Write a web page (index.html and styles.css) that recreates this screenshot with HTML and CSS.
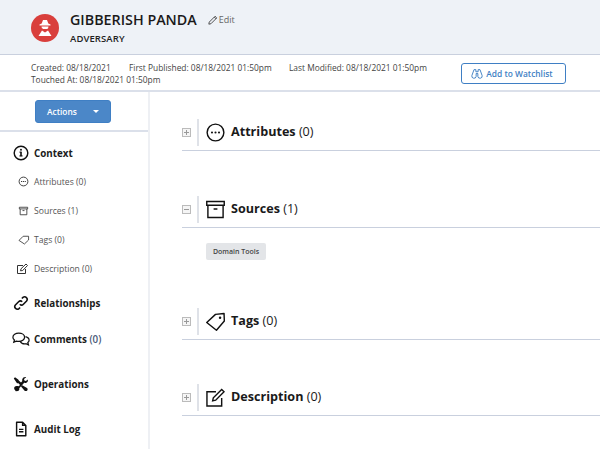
FILE: index.html
```html
<!DOCTYPE html>
<html lang="en">
<head>
<meta charset="utf-8">
<title>Gibberish Panda</title>
<link rel="stylesheet" href="styles.css">
</head>
<body>
<header class="hero">
  <div class="avatar">
    <svg viewBox="0 0 28 28" width="28" height="28"><path fill="#fff" d="M12 6h4l1.300 3.500 2.200 1v1h-11v-1l2.200-1zM10.500 12.500h7l-.4 1.800c-.6.9-1.700.7-3.100.7s-2.500.2-3.100-.7zM11 16.500l3 2 3-2 3.500 5.500h-13z"/></svg>
  </div>
  <div class="hero-text">
    <div class="title-row">
      <h1>GIBBERISH PANDA</h1>
      <span class="edit"><svg viewBox="0 0 12 12" width="10" height="10"><path fill="none" stroke="#333" stroke-width="1" d="M1.500 8.500 8.500 1.500l2 2-7 7-2.500.5zM7.500 2.500l2 2"/></svg>Edit</span>
    </div>
    <div class="subtitle">ADVERSARY</div>
  </div>
</header>
<div class="meta">
  <div class="dates">
    <div class="date-row"><span class="d1">Created: 08/18/2021</span><span class="d2">First Published: 08/18/2021 01:50pm</span><span>Last Modified: 08/18/2021 01:50pm</span></div>
    <div>Touched At: 08/18/2021 01:50pm</div>
  </div>
  <button class="watch"><svg viewBox="0 0 14 12" width="12" height="11"><path fill="none" stroke="#3f7fc4" stroke-width="1.100" d="M3.500 1.500h2.200v2.500h2.600V1.500h2.200l2.500 7a2 2 0 0 1-5 1V6H6v3.500a2.500 2.500 0 0 1-5-1z"/></svg>Add to Watchlist</button>
</div>
<div class="body">
  <aside class="side">
    <div class="act-wrap"><button class="actions"><span>Actions</span><i class="caret"></i></button></div>
    <nav class="nav">
      <div class="top t-context"><svg class="ni" viewBox="0 0 20 20"><circle cx="10" cy="10" r="8.500" fill="none" stroke="#111" stroke-width="1.800"/><rect x="9" y="8.500" width="2" height="5.500" fill="#111"/><rect x="8" y="13" width="4" height="1.300" fill="#111"/><rect x="8" y="8.300" width="2.500" height="1.200" fill="#111"/><circle cx="10" cy="6" r="1.200" fill="#111"/></svg>Context</div>
      <div class="sub"><span class="si"><svg viewBox="0 0 12 12" width="11" height="11"><circle cx="6" cy="6" r="4.800" fill="none" stroke="#333" stroke-width="1"/><path stroke="#333" stroke-width="1.200" stroke-dasharray="1.200 .8" d="M3.300 6h5.600"/></svg></span>Attributes (0)</div>
      <div class="sub"><span class="si"><svg viewBox="0 0 12 12" width="11" height="10"><path fill="none" stroke="#333" stroke-width="1" d="M1 1.500h10v2H1zM2 3.500v7h8v-7M4.800 5.500h2.400"/></svg></span>Sources (1)</div>
      <div class="sub"><span class="si"><svg viewBox="0 0 14 12" width="12" height="10"><path fill="none" stroke="#333" stroke-width="1" d="M1 6.500 6 1.500h6.500v4.500L7.500 10.800z"/></svg></span>Tags (0)</div>
      <div class="sub sub-wide"><span class="si"><svg viewBox="0 0 12 12" width="12" height="12"><path fill="none" stroke="#333" stroke-width="1" d="M7 2.500H1.500v8h8V6M4.500 7.800l.5-2 5-4.800 1.500 1.500-4.800 5z"/></svg></span>Description (0)</div>
      <div class="top t-rel"><svg class="ni" viewBox="0 0 20 20"><path fill="none" stroke="#111" stroke-width="2" d="M8.500 11.500a3.200 3.200 0 0 0 4.500 0l4-4a3.200 3.200 0 0 0-4.500-4.500l-1.400 1.400M11.500 8.500a3.200 3.200 0 0 0-4.500 0l-4 4a3.200 3.200 0 0 0 4.500 4.500l1.400-1.400"/></svg>Relationships</div>
      <div class="top t-com"><svg class="ni ni-com" viewBox="0 0 20 16"><path fill="none" stroke="#111" stroke-width="1.400" d="M7.500 1.500C4 1.500 1 3.500 1 6c0 1.200.7 2.300 1.700 3L2 11.500l2.800-1.200c.9.300 1.800.4 2.700.4 3.500 0 6.500-2 6.500-4.700s-3-4.500-6.500-4.500zM15 5.300c2.300.6 4 2.100 4 4 0 1-.5 2-1.400 2.700l.7 2.500-2.900-1.200c-2.500.4-5.200-.6-6.200-2.600"/></svg>Comments <span class="num">(0)</span></div>
      <div class="top t-op"><svg class="ni" viewBox="0 0 20 20"><path fill="#111" d="M2.500 1.500 1 3l4 6 1.800.2 2 2-1.700 1.500L5.500 12.500a3.200 3.200 0 0 0-4 3.800l2 2.700 2.800-.3c1.500-.8 2-2.300 1.500-3.500l6.200-6.700c1.800.6 3.800-.2 4.500-2l.2-2.200-2.700 2-1.800-.6-.4-1.900L16.500 1.500c-2-.5-4.500.5-5 3v2L10 8 7.500 6 6.500 4.500zM11.500 11.500l-1.500 1.500 4.500 5.300c1 .8 2.500.7 3.300-.3s.7-2.200-.3-3z"/></svg>Operations</div>
      <div class="top t-aud"><svg class="ni" viewBox="0 0 20 20"><path fill="none" stroke="#111" stroke-width="1.800" stroke-linejoin="round" d="M4.500 1.500h7.500l4 4v13h-11.500zM12 1.500v4h4M7.500 10.500h5.500M7.500 13.500h5.500"/></svg>Audit Log</div>
    </nav>
  </aside>
  <main class="main">
    <section class="sec">
      <div class="sec-head"><span class="tog plus"></span><span class="rule"></span><svg class="hi" viewBox="0 0 20 20"><circle cx="10" cy="10" r="8.800" fill="none" stroke="#111" stroke-width="1.500"/><circle cx="6.300" cy="10" r="1.100" fill="#111"/><circle cx="10" cy="10" r="1.100" fill="#111"/><circle cx="13.700" cy="10" r="1.100" fill="#111"/></svg><h2>Attributes <span>(0)</span></h2></div>
    </section>
    <section class="sec">
      <div class="sec-head"><span class="tog"></span><span class="rule"></span><svg class="hi" viewBox="0 0 20 20"><path fill="none" stroke="#111" stroke-width="1.500" d="M.8 1.500h18.400v4H.8zM2 5.500v13h16v-13M8 9.500h4"/></svg><h2>Sources <span>(1)</span></h2></div>
      <div class="sec-body"><span class="badge">Domain Tools</span></div>
    </section>
    <section class="sec">
      <div class="sec-head"><span class="tog plus"></span><span class="rule"></span><svg class="hi" viewBox="0 0 20 20"><path fill="none" stroke="#111" stroke-width="1.500" stroke-linejoin="round" d="M.8 11 10 2.500l9-1 .3 8-8.300 9.700z"/><circle cx="14.800" cy="6" r="1.300" fill="#111"/></svg><h2>Tags <span>(0)</span></h2></div>
    </section>
    <section class="sec sec-last">
      <div class="sec-head"><span class="tog plus"></span><span class="rule"></span><svg class="hi" viewBox="0 0 20 20"><path fill="none" stroke="#111" stroke-width="1.500" d="M10.500 4H1v15h15.500v-8.500M7 13.500l.7-3.200L16.500 1.500l2.500 2.500-8.800 8.800z"/></svg><h2>Description <span>(0)</span></h2></div>
    </section>
  </main>
</div>
</body>
</html>
```
FILE: styles.css
```css
* { box-sizing: border-box; }
html, body { margin: 0; height: 449px; overflow: hidden; }
body { font-family: "Open Sans", "Liberation Sans", sans-serif; color: #222; background: #fff; width: 600px; }
.hero { height: 55px; background: #eef2f7; border-bottom: 1px solid #c9d0de; display: flex; padding: 14px 0 0 31px; gap: 11px; }
.avatar { width: 28px; height: 28px; border-radius: 50%; background: #d93f3c; }
.avatar svg { display: block; }
.hero-text { display: flex; flex-direction: column; }
.title-row { display: flex; align-items: center; height: 11px; }
h1 { margin: 0; font-size: 14.300px; font-weight: 600; color: #1a1a1a; line-height: 11px; }
.edit { font-size: 9px; color: #666; margin-left: 11px; display: flex; align-items: center; gap: 1px; }
.subtitle { font-size: 9.500px; font-weight: 600; color: #222; margin-top: 7px; line-height: 14px; letter-spacing: .1px; }
.meta { height: 37px; border-bottom: 2px solid #dbe0ea; padding: 7px 34px 0 31px; display: flex; justify-content: space-between; font-size: 8.400px; color: #444; line-height: 12px; }
.date-row { display: flex; }
.d1 { width: 98px; }
.d2 { width: 160px; }
.dates { width: 400px; white-space: nowrap; }
.watch { width: 105px; height: 21px; margin-top: 1px; border: 1px solid #3f7fc4; border-radius: 3px; background: #fff; color: #3f7fc4; font: 600 8.400px "Open Sans", sans-serif; display: flex; align-items: center; justify-content: center; gap: 3px; padding: 0 3px 0 0; }
.body { display: flex; height: 357px; }
.side { width: 150px; border-right: 2px solid #eef0f4; flex: none; }
.act-wrap { height: 40px; border-bottom: 2px solid #dbe0ea; padding: 8px 0 0 35px; }
.actions { width: 76px; height: 23px; background: #4b87c8; border: 1px solid #3f7fc4; border-radius: 3px; color: #fff; font: 600 8.400px "Open Sans", sans-serif; padding: 0 0 0 11px; display: flex; align-items: center; justify-content: space-between; }
.caret { width: 0; height: 0; border: 3.500px solid transparent; border-top-color: #fff; border-bottom: 0; margin-right: 11px; }
.nav { display: flex; flex-direction: column; }
.top { display: flex; align-items: center; font-size: 9.800px; font-weight: 700; color: #1c1c1c; padding-left: 13px; height: 20px; white-space: pre; }
.ni { width: 16px; height: 16px; margin-right: 5px; flex: none; }
.ni-com { width: 18px; margin: 0 4px 0 -1px; }
.num { color: #4a5a78; font-weight: 600; }
.sub { display: flex; align-items: center; height: 29px; font-size: 8.600px; color: #555; padding-left: 18px; }
.sub-wide { padding-left: 16px; }
.sub-wide .si { width: 18px; }
.si { width: 16px; display: flex; align-items: center; }
.t-context { margin-top: 11px; margin-bottom: 4px; }
.t-rel { margin-top: 10px; }
.t-com { margin-top: 16px; }
.t-op { margin-top: 25px; }
.t-aud { margin-top: 25px; }
.main { flex: 1; padding: 27px 0 0 32px; display: flex; flex-direction: column; gap: 45px; }
.sec-last { margin-top: -1px; }
.sec-head { height: 32px; border-bottom: 1px solid #c9d0de; display: flex; align-items: flex-start; }
.tog { width: 9px; height: 9px; margin-top: 9px; border: 1px solid #bbb; background: #f5f5f5; position: relative; flex: none; }
.tog::before { content: ""; position: absolute; left: 1px; right: 1px; top: 3px; height: 1px; background: #999; }
.tog.plus::after { content: ""; position: absolute; top: 1px; bottom: 1px; left: 3px; width: 1px; background: #999; }
.rule { width: 2px; height: 27px; background: #dfe2e8; margin-left: 6px; flex: none; }
.hi { width: 19px; height: 19px; margin: 4px 6px 0 7px; flex: none; }
h2 { margin: 0; font-size: 12.600px; font-weight: 700; color: #1a1a1a; line-height: 25px; }
h2 span { font-weight: 400; }
.sec-body { padding: 15px 0 0 24px; height: 35px; display: flex; align-items: flex-start; }
.badge { height: 17px; line-height: 17px; width: 60px; text-align: center; background: #e3e5e8; border-radius: 2px; font-size: 7px; font-weight: 600; color: #444; }
```
